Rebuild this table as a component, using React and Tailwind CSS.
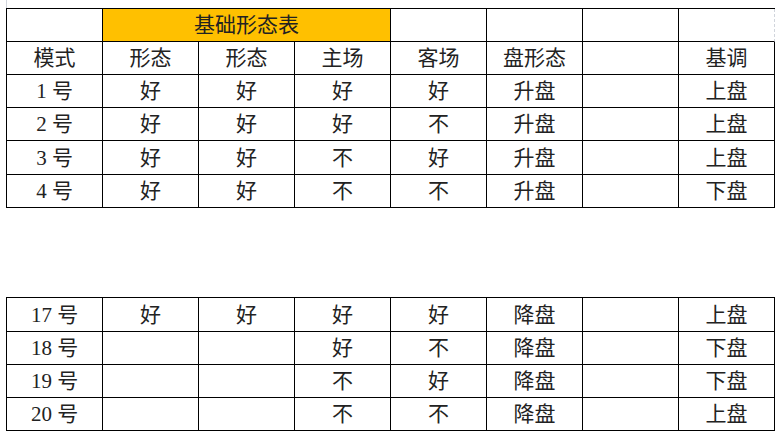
import React from 'react';

const fontStack = { fontFamily: '"Liberation Serif", "Noto Sans CJK SC", serif' };

const topRows = [
  ['模式', '形态', '形态', '主场', '客场', '盘形态', '', '基调'],
  ['1 号', '好', '好', '好', '好', '升盘', '', '上盘'],
  ['2 号', '好', '好', '好', '不', '升盘', '', '上盘'],
  ['3 号', '好', '好', '不', '好', '升盘', '', '上盘'],
  ['4 号', '好', '好', '不', '不', '升盘', '', '下盘'],
];

const bottomRows = [
  ['17 号', '好', '好', '好', '好', '降盘', '', '上盘'],
  ['18 号', '', '', '好', '不', '降盘', '', '下盘'],
  ['19 号', '', '', '不', '好', '降盘', '', '下盘'],
  ['20 号', '', '', '不', '不', '降盘', '', '上盘'],
];

const Cell = ({ children, h = 'h-[33px]' }) => (
  <div className={`${h} border-r border-b border-black flex items-center justify-center pt-px text-[21px] text-[#222] leading-none`}>
    {children}
  </div>
);

const Row = ({ cells, h }) => (
  <>
    {cells.map((c, i) => (
      <Cell key={i} h={h}>{c}</Cell>
    ))}
  </>
);

const App = () => {
  return (
    <div className="w-[778px] h-[439px] bg-white overflow-hidden relative" style={fontStack}>
      {/* faint spreadsheet gridline at the corner */}
      <div className="absolute left-[6px] top-0 w-px h-[8px] bg-gray-300" />

      <div className="pt-[8px] pl-[6px]">
        <div className="grid grid-cols-[repeat(8,96px)] border-l border-t border-black w-[769px]">
          {/* title row */}
          <Cell />
          <div className="col-span-3 h-[33px] border-r border-b border-black bg-[#ffc000] flex items-center justify-center pt-px text-[21px] text-[#222] leading-none">
            基础形态表
          </div>
          <Cell />
          <Cell />
          <Cell />
          <div className="h-[33px] border-r border-r-gray-300 [border-right-style:dashed] border-b border-b-black" />

          {topRows.map((r, i) => (
            <Row key={i} cells={r} h={i === 3 ? 'h-[34px]' : 'h-[33px]'} />
          ))}
        </div>

        <div className="mt-[89px] grid grid-cols-[repeat(8,96px)] border-l border-t border-black w-[769px]">
          {bottomRows.map((r, i) => (
            <Row key={i} cells={r} h={i === 0 ? 'h-[34px]' : 'h-[33px]'} />
          ))}
        </div>
      </div>
    </div>
  );
};

export default App;
